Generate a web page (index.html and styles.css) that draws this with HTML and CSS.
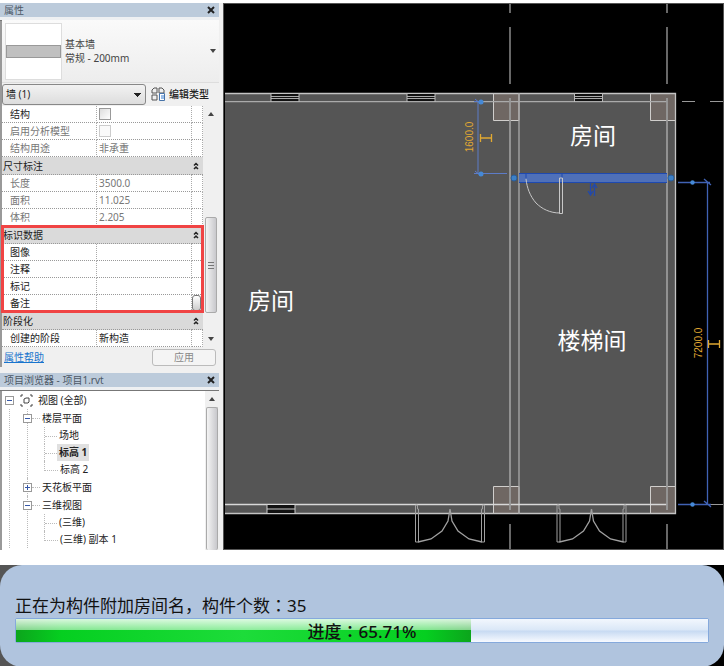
FILE: index.html
```html
<!DOCTYPE html>
<html lang="zh-CN">
<head>
<meta charset="utf-8">
<title>项目1.rvt</title>
<link rel="stylesheet" href="styles.css">
</head>
<body>
<main class="workspace">
  <aside class="dock">
    <section class="panel">
      <header class="panel-title"><h2>属性</h2>
        <button class="close" type="button" aria-label="关闭属性"><svg viewBox="0 0 8 8"><path d="M1 1l6 6M7 1L1 7"/></svg></button>
      </header>
      <button class="type-picker" type="button">
        <span class="preview"><span class="preview-wall"></span></span>
        <span class="type-name">基本墙<br>常规 - 200mm</span>
        <svg class="caret" viewBox="0 0 6 4"><path d="M0 0h6L3 4z"/></svg>
      </button>
      <div class="filter">
        <select aria-label="图元"><option>墙 (1)</option></select>
        <button class="edit-type" type="button">
          <svg viewBox="0 0 14 14"><path d="M6 1H3L1 3v3h5zM8 6V1h3l2 2v3zM1 8h5v5H1z" fill="none" stroke="#555"/><path d="M8.500 6.500h5v7h-5z" fill="#fff" stroke="#4773a8"/><path d="M10 9h3M10 11h3" stroke="#347bd0"/></svg>
          编辑类型
        </button>
      </div>
      <div class="properties">
        <table>
          <colgroup><col class="col-name"><col><col class="col-more"></colgroup>
          <tbody>
            <tr><th><label for="structural">结构</label></th><td><input id="structural" type="checkbox"></td><td></td></tr>
            <tr class="off"><th><label for="analytic">启用分析模型</label></th><td><input id="analytic" type="checkbox" disabled></td><td></td></tr>
            <tr class="off"><th>结构用途</th><td>非承重</td><td></td></tr>
          </tbody>
          <tbody>
            <tr class="group"><th colspan="2">尺寸标注</th><td><svg viewBox="0 0 6 8"><path d="M1 3.500l2-2 2 2M1 7l2-2 2 2"/></svg></td></tr>
            <tr class="off"><th>长度</th><td>3500.0</td><td></td></tr>
            <tr class="off"><th>面积</th><td>11.025</td><td></td></tr>
            <tr class="off"><th>体积</th><td>2.205</td><td></td></tr>
          </tbody>
          <tbody class="marked">
            <tr class="group"><th colspan="2">标识数据</th><td><svg viewBox="0 0 6 8"><path d="M1 3.500l2-2 2 2M1 7l2-2 2 2"/></svg></td></tr>
            <tr><th>图像</th><td></td><td></td></tr>
            <tr><th>注释</th><td></td><td></td></tr>
            <tr><th>标记</th><td></td><td></td></tr>
            <tr><th>备注</th><td></td><td class="more-cell"><button class="more" type="button" aria-label="编辑备注"></button></td></tr>
          </tbody>
          <tbody>
            <tr class="group"><th colspan="2">阶段化</th><td><svg viewBox="0 0 6 8"><path d="M1 3.500l2-2 2 2M1 7l2-2 2 2"/></svg></td></tr>
            <tr><th>创建的阶段</th><td>新构造</td><td></td></tr>
          </tbody>
        </table>
        <div class="scroll">
          <svg class="arrow" viewBox="0 0 6 4"><path d="M0 4h6L3 0z"/></svg>
          <span class="gap"></span>
          <span class="thumb"><svg viewBox="0 0 6 8"><path d="M0 1.500h6M0 4.500h6M0 7.500h6" stroke="#777"/></svg></span>
          <svg class="arrow" viewBox="0 0 6 4"><path d="M0 0h6L3 4z"/></svg>
        </div>
      </div>
      <footer class="panel-foot"><a href="#help">属性帮助</a><button type="button" disabled>应用</button></footer>
    </section>

    <section class="panel browser">
      <header class="panel-title"><h2>项目浏览器 - 项目1.rvt</h2>
        <button class="close" type="button" aria-label="关闭项目浏览器"><svg viewBox="0 0 8 8"><path d="M1 1l6 6M7 1L1 7"/></svg></button>
      </header>
      <div class="browser-body">
        <div class="tree">
          <div class="row">
            <button class="toggle" type="button" aria-label="折叠"><svg viewBox="0 0 7 7"><path d="M1 3.500h5"/></svg></button>
            <svg class="views-icon" viewBox="0 0 13 13"><path d="M3 1H1v2M10 1h2v2M1 10v2h2M12 10v2h-2M4 5l2-1h3v4L8 9H4z"/></svg>
            视图 (全部)
          </div>
          <ul class="branches">
            <li><div class="row"><button class="toggle" type="button" aria-label="折叠"><svg viewBox="0 0 7 7"><path d="M1 3.500h5"/></svg></button><span class="node">楼层平面</span></div>
              <ul class="leaves"><li>场地</li><li><b>标高 1</b></li><li>标高 2</li></ul></li>
            <li><div class="row"><button class="toggle" type="button" aria-label="展开"><svg viewBox="0 0 7 7"><path d="M1 3.500h5M3.500 1v5"/></svg></button><span class="node">天花板平面</span></div></li>
            <li><div class="row"><button class="toggle" type="button" aria-label="折叠"><svg viewBox="0 0 7 7"><path d="M1 3.500h5"/></svg></button><span class="node">三维视图</span></div>
              <ul class="leaves"><li>(三维)</li><li>(三维) 副本 1</li></ul></li>
          </ul>
        </div>
        <div class="scroll">
          <svg class="arrow" viewBox="0 0 6 4"><path d="M0 4h6L3 0z"/></svg>
          <span class="thumb"></span>
        </div>
      </div>
    </section>
  </aside>

  <svg class="plan" viewBox="224 3 500 547" preserveAspectRatio="xMinYMin meet" role="img" aria-label="标高 1 平面">
    <defs>
      <g id="window"><path d="M0 94h28v7H0z" fill="#111"/><path d="M0 96.500h28M0 98.500h28" stroke="#aaa"/><path d="M0 93v9M28 93v9" stroke="#bbb"/></g>
      <g id="double-door" fill="none" stroke="#a0a0a0">
        <path d="M-34.500 505h2v4h1v33h-3zM34.500 505h-2v4h-1v33h3z"/>
        <path d="M-32 542l13-3 11-8 6-10 2-12 2 12 6 10 11 8 13 3" stroke-width="1.300"/>
      </g>
      <g id="handle" fill="none" stroke="#e0a832" stroke-width="1.300"><path d="M0 0h12M.5-4v8M11.500-4v8"/></g>
    </defs>
    <path d="M225 93h451v421H225z" fill="#555"/>
    <g fill="#6f6763" stroke="#d0cecc">
      <path d="M493.500 93.500h25.500v27h-25.500zM650.500 93.500h25v27h-25zM493.500 486.500h25.500v27h-25.500zM650.500 486.500h25v27h-25z"/>
    </g>
    <g fill="none" stroke="#aaa" stroke-width="1.300">
      <path d="M225 93.500h450.500v420H225" stroke="#c4c4c4"/>
      <path d="M225 101.700h442M519 93v421"/>
      <path d="M225 504.500h442" stroke="#d8d8d8"/>
      <path d="M510 98v412M667 98v412" stroke-width="1.800" stroke="#999"/>
    </g>
    <path d="M510 3v10M510 27v57M667 3v10M667 27v57M510 524v26M667 524v26" stroke="#737373" stroke-width="1.800"/>
    <path d="M682 101.500h13M710 101.500h14M711 504.500h13" stroke="#999"/>
    <use href="#window" x="271"/><use href="#window" x="407"/><use href="#window" x="574.500"/>
    <path d="M267 505h28v8h-28z" fill="#111"/><path d="M267 509h28M267 504v10M295 504v10" stroke="#ccc"/>
    <use href="#double-door" x="450"/><use href="#double-door" x="591.500"/>

    <path d="M519 173.500h148v9H519z" fill="#4f70b8"/>
    <path d="M519 173.500h148M519 182.500h148M526 174v4M562 174v4" stroke="#1e49b0"/>
    <path d="M559.500 178v35.500h3V178zM526 179c1 9 4 17 10 24 6 6 14 10 24 10" fill="none" stroke="#c8c8c8"/>
    <path d="M590.500 183v12M588 191l2.500 4 2.500-4M594.500 196v-12M592 188l2.500-4 2.500 4" fill="none" stroke="#2149ac" stroke-width="1.300"/>
    <g fill="#3c80c6" stroke="#285d9c"><circle cx="514" cy="178" r="3"/><circle cx="671" cy="178" r="3"/></g>

    <g fill="none" stroke="#5d7cc8">
      <path d="M478 101v73M474 101.500h7M474 173.500h33M475 99l6 5M475 171l6 5"/>
      <path d="M707.500 182v323M678 182.500h32M678 504.500h33M704 179l7 6M704 501l7 6" stroke="#4062b4" stroke-width="1.300"/>
    </g>
    <g fill="#4589d7"><circle cx="481" cy="102" r="2.500"/><circle cx="481" cy="174" r="2.500"/><circle cx="692.500" cy="182.500" r="2.200"/><circle cx="692.500" cy="504.500" r="2.200"/></g>
    <use href="#handle" x="480" y="138"/><use href="#handle" x="708" y="344"/>
    <g class="dimension">
      <text transform="translate(472.500 137) rotate(-90)">1600.0</text>
      <text transform="translate(702 343) rotate(-90)">7200.0</text>
    </g>
    <g class="room">
      <text x="593" y="144">房间</text>
      <text x="271" y="309">房间</text>
      <text x="592" y="349">楼梯间</text>
    </g>
    <path d="M224 549.500h500M224 3.500h500M723.500 3v547" stroke="#555" fill="none"/>
  </svg>
</main>

<section class="status">
  <div class="status-card">
    <label for="task">正在为构件附加房间名，构件个数<span class="colon">：</span>35</label>
    <div class="meter">
      <progress id="task" max="100" value="65.71"></progress>
      <span class="meter-text">进度<span class="colon">：</span>65.71%</span>
    </div>
  </div>
</section>
</body>
</html>
```
FILE: styles.css
```css
* { box-sizing: border-box; }

body {
  margin: 0;
  padding: 3px 2px 0 0;
  min-height: 100vh;
  display: flex;
  flex-direction: column;
  gap: 15px;
  background: #fff;
  color: #222;
  font: 10px/17px "Noto Sans", "Noto Sans CJK SC", sans-serif;
}

button, select, input { font: inherit; color: inherit; margin: 0; padding: 0; }
button { border: 0; background: none; }
svg { display: block; flex: none; }
ul { list-style: none; margin: 0; padding: 0; }

.workspace {
  display: grid;
  grid-template-columns: 224px 1fr;
  background: #000;
}

.plan { width: 100%; background: #000; }
.room { fill: #fff; font-size: 23px; text-anchor: middle; }
.dimension { fill: #e0a832; font: 10px "Liberation Sans", sans-serif; text-anchor: middle; }

/* Docked panels */
.dock {
  display: flex;
  flex-direction: column;
  gap: 6px;
  padding-right: 4px;
  background: #f0f0f0;
  border-right: 1px solid #555;
}

.panel { border-left: 2px solid #999; }
.browser { flex: 1; display: flex; flex-direction: column; }

.panel-title {
  display: flex;
  align-items: center;
  justify-content: space-between;
  height: 17px;
  margin-left: -2px;
  padding: 0 4px;
  background: #bccbdb;
  border-bottom: 3px solid #eef0f2;
  box-shadow: 0 1px #777;
}
.panel-title h2 { margin: 0; font-size: 10px; font-weight: 400; line-height: 14px; color: #4c5866; }
.close svg { width: 8px; height: 8px; stroke: #222; stroke-width: 2; }

.type-picker {
  display: flex;
  align-items: center;
  width: 100%;
  height: 63px;
  padding: 3px;
  text-align: left;
  line-height: 14px;
  color: #444;
  background: linear-gradient(#fafafa, #ededed);
  border-bottom: 1px solid #ddd;
}
.preview {
  display: flex;
  align-items: center;
  width: 57px;
  height: 57px;
  margin-right: 3px;
  background: #fff;
  border: 1px solid #ddd;
}
.preview-wall { flex: 1; height: 13px; background: #c0c0c0; border: 1px solid #999; }
.type-name { flex: 1; }
.caret { width: 6px; height: 4px; fill: #444; }

.filter { display: flex; align-items: center; height: 22px; margin-bottom: 1px; }
.filter select {
  appearance: none;
  width: 144px;
  height: 21px;
  padding-left: 3px;
  border: 1px solid #888;
  border-radius: 3px;
  background:
    conic-gradient(from -45deg at 50% 100%, #222 90deg, transparent 0) 132px 9px / 8px 0 no-repeat,
    linear-gradient(to bottom left, #222 50%, transparent 50%) 131px 8px / 4px 4px no-repeat,
    linear-gradient(to bottom right, #222 50%, transparent 50%) 135px 8px / 4px 4px no-repeat,
    linear-gradient(#f2f2f2, #ddd);
}
.edit-type { display: flex; align-items: center; gap: 4px; margin-left: 5px; font-weight: 500; }
.edit-type svg { width: 14px; height: 14px; }

/* Property grid */
.properties { display: flex; justify-content: space-between; padding-right: 2px; }
table {
  width: 201px;
  table-layout: fixed;
  border-collapse: separate;
  border-spacing: 0;
  background: #fff;
}
.col-name { width: 95px; }
.col-more { width: 11px; }
tr { height: 17px; }
th, td {
  height: 17px;
  padding: 0 0 0 2px;
  border-right: 1px dotted #aaa;
  border-bottom: 1px dotted #999;
  font-weight: 400;
  line-height: 16px;
  text-align: left;
  white-space: nowrap;
}
th { padding-left: 8px; }
.off { color: #777; }
.group th, .group td { height: 18px; background: #dadada; border-right: 0; padding-left: 1px; }
.group svg { width: 6px; height: 8px; fill: none; stroke: #222; stroke-width: 1.5; }
.marked { outline: 3px solid #f04444; outline-offset: -2px; }
input[type="checkbox"] {
  appearance: none;
  display: block;
  width: 12px;
  height: 12px;
  border: 1px solid #999;
  background: linear-gradient(135deg, #ddd, #fff);
}
input[type="checkbox"]:disabled { border-color: #ccc; background: #fafafa; }
td.more-cell { padding: 0; }
.more { display: block; width: 9px; height: 16px; border: 1px solid #777; border-radius: 3px; background: linear-gradient(#fff, #ccc); }

.scroll { display: flex; flex-direction: column; align-items: center; width: 13px; background: #f0f0f0; }
.arrow { width: 6px; height: 4px; margin: 6px 0; fill: #444; }
.gap { flex: 1; }
.thumb {
  display: flex;
  align-items: center;
  justify-content: center;
  width: 12px;
  height: 96px;
  margin-bottom: 18px;
  border: 1px solid #aaa;
  border-radius: 2px;
  background: linear-gradient(to right, #f4f4f4, #c8c8cc);
}
.thumb svg { width: 6px; height: 8px; }

.panel-foot { display: flex; align-items: center; justify-content: space-between; height: 20px; padding-right: 3px; }
.panel-foot a { padding-left: 2px; color: #1874cd; }
.panel-foot button { width: 64px; height: 17px; line-height: 15px; color: #888; border: 1px solid #bbb; border-radius: 3px; background: #f4f4f4; }

/* Project browser */
.browser-body { flex: 1; display: flex; padding-top: 1px; padding-right: 1px; }
.browser-body .scroll { margin-left: auto; }
.browser-body .thumb { flex: 1; height: auto; margin: 0; border-bottom: 0; }
.tree { flex: 1; padding: 1px 0 0 3px; background: #fff; }
.row { display: flex; align-items: center; height: 17px; }
.toggle { width: 9px; height: 9px; background: #fff; border: 1px solid #999; }
.toggle svg { width: 7px; height: 7px; stroke: #3658a8; fill: none; }
.views-icon { width: 13px; height: 13px; margin: 0 5px 0 6px; fill: none; stroke: #444; }
.branches { margin-left: 4px; padding-left: 17px; border-left: 1px dotted #bbb; }
.branches > li { padding-top: 1px; border-left: 1px dotted #bbb; }
.branches .toggle { margin-left: -5px; }
.node { display: flex; align-items: center; }
.node::before { content: ""; width: 8px; margin-right: 2px; border-top: 1px dotted #bbb; }
.leaves { margin-left: 16px; }
.leaves li { display: flex; height: 17px; border-left: 1px dotted #bbb; }
.leaves li::before { content: ""; width: 12px; height: 9px; margin-right: 2px; border-bottom: 1px dotted #bbb; }
.leaves li:last-child { border-left-color: transparent; }
.leaves li:last-child::before { width: 13px; margin-left: -1px; border-left: 1px dotted #bbb; }
.leaves b { margin-left: -2px; padding: 0 2px; background: #e0e0e0; }

/* Task progress */
.status { flex: 1; display: flex; background: linear-gradient(to right, #555 50%, #000 50%); }
.status-card { flex: 1; padding: 27px 15px 24px; border-radius: 22px; background: #b0c4de; color: #111; font-size: 17px; line-height: 25px; }
.status-card label { display: block; }
.colon { font-family: "Noto Sans CJK JP", sans-serif; font-feature-settings: "locl" 0; }
.meter { display: grid; height: 25px; }
.meter > * { grid-area: 1 / 1; }
progress {
  appearance: none;
  width: 100%;
  height: 25px;
  border: 1px solid #85a9dc;
  border-radius: 2px;
}
progress::-webkit-progress-bar { background: linear-gradient(#f2f7fd, #dae7f7 48%, #c7daf2 52%, #f7faff); }
progress::-webkit-progress-value {
  background:
    linear-gradient(rgba(255, 255, 255, .85), rgba(255, 255, 255, .5) 48%, transparent 50%),
    linear-gradient(to right, #0ca51c, #05cf20 10%, #1ddc3a 50%, #05cf20 90%, #0ca51c);
}
.meter-text { z-index: 1; text-align: center; font-weight: 500; }
```
